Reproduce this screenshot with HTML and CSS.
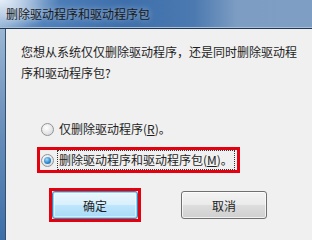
FILE: index.html
```html
<!DOCTYPE html>
<html lang="zh-CN">
<head>
  <meta charset="UTF-8">
  <title>删除驱动程序和驱动程序包</title>
  <link rel="stylesheet" href="styles.css">
</head>
<body>
  <div class="window">
    <!-- TITLE BAR -->
    <div class="title-bar">删除驱动程序和驱动程序包</div>

    <div class="frame">
      <div class="frame-left"></div>

      <!-- CLIENT AREA -->
      <div class="client">
        <p class="question">您想从系统仅仅删除驱动程序，还是同时删除驱动程序和驱动程序包?</p>

        <div class="options">
          <label class="option">
            <span class="radio"></span>
            <span class="option-text">仅删除驱动程序(<u>R</u>)。</span>
          </label>
          <label class="option marked">
            <span class="radio checked"></span>
            <span class="option-text focus">删除驱动程序和驱动程序包(<u>M</u>)。</span>
          </label>
        </div>

        <div class="buttons">
          <div class="btn-mark">
            <button class="btn default">确定</button>
          </div>
          <button class="btn">取消</button>
        </div>
      </div>
    </div>
  </div>
</body>
</html>
```

FILE: styles.css
```css
/* RESET */
* {
  margin: 0;
  padding: 0;
  box-sizing: border-box;
}
body {
  width: 312px;
  height: 240px;
  overflow: hidden;
  font-family: "Noto Sans CJK SC", "Microsoft YaHei", sans-serif;
  font-size: 12px;
  color: #1e1e1e;
  background: #f0f0f0;
}
.window {
  display: flex;
  flex-direction: column;
  height: 240px;
}

/* ----- TITLE BAR ----- */
.title-bar {
  height: 29px;
  padding: 6px 0 0 6px;
  line-height: 16px;
  color: #1a1a1a;
  text-shadow: 0 0 6px rgba(255,255,255,0.6);
  background:
    radial-gradient(ellipse 60px 30px at 0 0, rgba(235,242,250,0.95), rgba(235,242,250,0) 100%),
    linear-gradient(90deg, #8fb0d4 0%, #4f80ba 14%, #3e6fab 40%, #4b79b0 62%, #7d9dc3 76%, #7e9ec3 100%);
  border-bottom: 1px solid #1f3856;
  box-shadow: inset 0 -1px 0 #a9c0d8;
}

/* ----- FRAME ----- */
.frame {
  flex: 1;
  display: flex;
}
.frame-left {
  width: 6px;
  background: linear-gradient(180deg, #9bb6d3 0%, #6f93bd 40%, #3d6ea8 100%);
  border-right: 1px solid #33506f;
}
.client {
  flex: 1;
  padding: 12px 0 0 15px;
  background: #f0f0f0;
}
.question {
  width: 280px;
  line-height: 21px;
}

/* ----- OPTIONS ----- */
.options {
  margin: 33px 0 0 16px;
  display: flex;
  flex-direction: column;
  align-items: flex-start;
  gap: 5px;
}
.option {
  display: flex;
  align-items: center;
  height: 26px;
  padding: 0 2px 0 0;
  border: 3px solid transparent;
}
.option.marked {
  border-color: #e3000f;
}
.radio {
  width: 13px;
  height: 13px;
  margin-left: 1px;
  margin-right: 3px;
  border-radius: 50%;
  border: 1px solid #8f9398;
  background: radial-gradient(circle at 40% 35%, #ffffff 0%, #e6e6e6 55%, #cfd2d6 100%);
  position: relative;
}
.radio.checked::after {
  content: "";
  position: absolute;
  top: 2px;
  left: 2px;
  width: 7px;
  height: 7px;
  border-radius: 50%;
  background: radial-gradient(circle at 40% 35%, #a9dcf7 0%, #2f8ad0 55%, #1a5b98 100%);
}
.option-text {
  padding: 1px 1px;
  line-height: 16px;
  border: 1px solid transparent;
}
.option-text.focus {
  border: 1px dotted #333;
}
.option-text u {
  text-decoration: underline;
}

/* ----- BUTTONS ----- */
.buttons {
  display: flex;
  align-items: center;
  gap: 40px;
  margin: 15px 0 0 28px;
}
.btn-mark {
  border: 3px solid #e3000f;
}
.btn {
  display: block;
  width: 86px;
  height: 28px;
  font-family: inherit;
  font-size: 12px;
  color: #1e1e1e;
  border: 1px solid #707070;
  border-radius: 3px;
  background: linear-gradient(180deg, #f3f3f3 0%, #ebebeb 48%, #dddddd 52%, #cfcfcf 100%);
  box-shadow: inset 0 0 0 1px rgba(255,255,255,0.7);
}
.btn.default {
  border-color: #3c7fb1;
  background: linear-gradient(180deg, #eaf6fd 0%, #d9f0fc 48%, #bee6fd 52%, #a7d9f5 100%);
  box-shadow: inset 0 0 0 1px #8ed4f5, inset 0 0 0 2px rgba(255,255,255,0.5);
}
```
